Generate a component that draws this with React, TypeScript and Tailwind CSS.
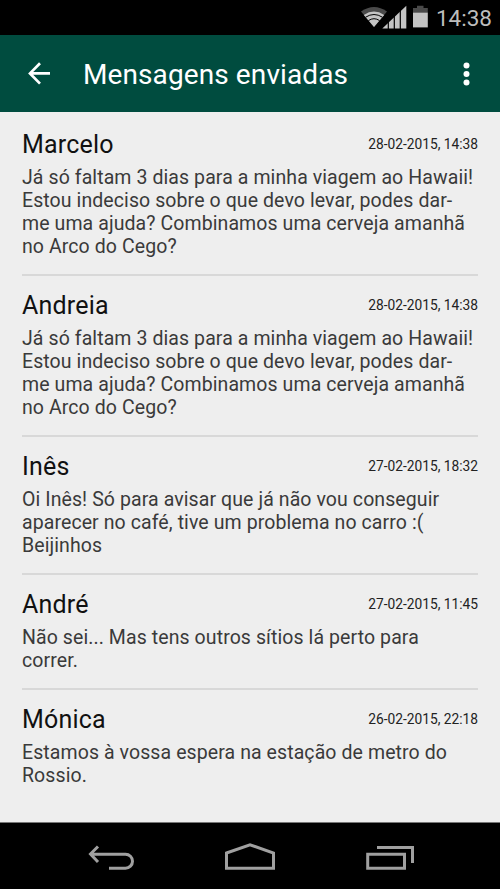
import React from "react";

type Message = { name: string; date: string; lines: string[] };

const messages: Message[] = [
  {
    name: "Marcelo",
    date: "28-02-2015, 14:38",
    lines: [
      "Já só faltam 3 dias para a minha viagem ao Hawaii!",
      "Estou indeciso sobre o que devo levar, podes dar-",
      "me uma ajuda? Combinamos uma cerveja amanhã",
      "no Arco do Cego?",
    ],
  },
  {
    name: "Andreia",
    date: "28-02-2015, 14:38",
    lines: [
      "Já só faltam 3 dias para a minha viagem ao Hawaii!",
      "Estou indeciso sobre o que devo levar, podes dar-",
      "me uma ajuda? Combinamos uma cerveja amanhã",
      "no Arco do Cego?",
    ],
  },
  {
    name: "Inês",
    date: "27-02-2015, 18:32",
    lines: [
      "Oi Inês! Só para avisar que já não vou conseguir",
      "aparecer no café, tive um problema no carro :(",
      "Beijinhos",
    ],
  },
  {
    name: "André",
    date: "27-02-2015, 11:45",
    lines: ["Não sei... Mas tens outros sítios lá perto para", "correr."],
  },
  {
    name: "Mónica",
    date: "26-02-2015, 22:18",
    lines: ["Estamos à vossa espera na estação de metro do", "Rossio."],
  },
];

function StatusBar() {
  return (
    <div className="flex h-[35px] shrink-0 items-center justify-end bg-black pr-[8px]">
      <svg width="68" height="35" viewBox="0 0 68 35" aria-hidden>
        {/* wifi */}
        <path d="M0 11.6 Q13 2.4 26 11.6 L13 27 Z" fill="#4a4a4a" />
        <path d="M2.8 15 Q13 8.2 23.2 15 L13 27 Z" fill="#c4c4c4" />
        <path d="M4.6 17.2 Q13 11.8 21.4 17.2 M7.4 20.6 Q13 16.8 18.6 20.6" fill="none" stroke="#000" strokeWidth="1" />
        {/* signal */}
        <path d="M21.3 28.5 L45.3 5.8 V28.5 Z" fill="#c4c4c4" />
        <path d="M27.3 10 V29 M33.3 10 V29 M39.3 5 V29" stroke="#000" strokeWidth="1.2" />
        {/* battery */}
        <path d="M52 12.8 V8 H56 V5.8 H62.5 V8 H66.8 V12.8 Z" fill="#4a4a4a" />
        <path d="M52 12.6 H66.8 V27.4 H52 Z" fill="#c4c4c4" />
      </svg>
      <span className="mt-px ml-[7px] text-[22.5px] leading-[35px] text-[#bdbdbd]">14:38</span>
    </div>
  );
}

function AppBar() {
  return (
    <header className="flex h-[77px] shrink-0 items-center bg-[#004c3f] pr-[28px] pl-[27px] text-white">
      <svg width="23" height="23" viewBox="0 0 23 23" fill="none" stroke="currentColor" strokeWidth="2.7" aria-hidden>
        <path d="M13 1.2 L3 11.4 L13 21.6 M3 11.4 H23" />
      </svg>
      <h1 className="mt-[3px] ml-[33px] grow text-[28px] leading-[36px] tracking-[0.1px]">Mensagens enviadas</h1>
      <svg width="12" height="24" viewBox="0 0 12 24" fill="currentColor" aria-hidden>
        <circle cx="6.5" cy="3.5" r="3" />
        <circle cx="6.5" cy="12" r="3" />
        <circle cx="6.5" cy="20.5" r="3" />
      </svg>
    </header>
  );
}

function MessageItem({ name, date, lines }: Message) {
  return (
    <li className="border-b-2 border-[#d8d8d8] pt-[14px] pb-[16px] last:border-b-0">
      <div className="flex h-[37px] items-start justify-between">
        <h2 className="text-[25px] leading-[32px] tracking-[0.2px] text-[#111]">{name}</h2>
        <time className="text-[13.75px] leading-[30px] text-[#222]">{date}</time>
      </div>
      <p className="text-[19.5px] leading-[23px] tracking-[0.09px] whitespace-nowrap text-[#3a3a3a]">
        {lines.map((line) => (
          <span key={line} className="block">
            {line}
          </span>
        ))}
      </p>
    </li>
  );
}

function NavBar() {
  return (
    <nav className="flex h-[67px] shrink-0 items-center justify-center border-t border-[#777] bg-black">
      <svg width="500" height="66" viewBox="0 0 500 66" fill="none" stroke="#a0a0a0" strokeWidth="3" aria-hidden>
        <path d="M98 23.5 L90.5 31 L98 39 M90 31.2 H125.5 A6.9 6.9 0 0 1 125.5 45.2 H109" />
        <path d="M226.5 30 L250 21.8 L273.5 30 V45.2 H226.5 Z" />
        <path d="M367.7 31.2 H404.5 V45.2 H367.7 Z M377 24.5 H412.5 V40" />
      </svg>
    </nav>
  );
}

export default function App() {
  return (
    <div className="flex h-[889px] w-[500px] flex-col overflow-hidden bg-[#eeeeee] font-['Roboto','Noto_Sans',sans-serif]">
      <StatusBar />
      <AppBar />
      <ul className="grow px-[22px] pt-[3px]">
        {messages.map((m, i) => (
          <MessageItem key={i} {...m} />
        ))}
      </ul>
      <NavBar />
    </div>
  );
}
